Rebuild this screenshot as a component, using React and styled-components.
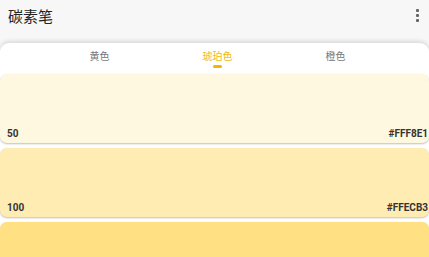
import React from "react";
import styled, { createGlobalStyle } from "styled-components";

const Global = createGlobalStyle`
  html, body { margin: 0; padding: 0; }
  body {
    background: #f7f7f7;
    font-family: Roboto, "Noto Sans CJK SC", "Noto Sans", sans-serif;
    width: 429px; height: 257px; overflow: hidden;
  }
  * { box-sizing: border-box; }
`;

const Page = styled.div`
  display: flex;
  flex-direction: column;
  height: 257px;
  overflow: hidden;
`;

const AppBar = styled.header`
  height: 31px;
  display: flex;
  align-items: center;
  justify-content: space-between;
  padding: 0 8px 0 8px;
  background: #f7f7f7;
  flex-shrink: 0;
`;

const Title = styled.h1`
  margin: 0;
  font-size: 15px;
  font-weight: 400;
  color: #222;
  font-family: "Noto Sans CJK SC", sans-serif;
`;

const More = styled.div`
  display: flex;
  flex-direction: column;
  gap: 2px;
  padding-right: 2px;
  span { width: 3px; height: 3px; background: #666; border-radius: 1px; display: block; }
`;

const Sheet = styled.div`
  margin-top: 12px;
  background: #fff;
  border-radius: 9px 9px 0 0;
  box-shadow: 0 -2px 4px rgba(0,0,0,0.12);
  display: flex;
  flex-direction: column;
  flex: 1;
  min-height: 0;
  overflow: hidden;
`;

const Tabs = styled.div`
  display: flex;
  justify-content: center;
  height: 31px;
  padding-left: 6px;
  flex-shrink: 0;
`;

const Tab = styled.div`
  width: 118px;
  display: flex;
  flex-direction: column;
  align-items: center;
  padding-top: 6px;
  font-size: 10px;
  line-height: 14px;
  font-family: "Noto Sans CJK SC", sans-serif;
  color: ${p => (p.$active ? "#f2b90c" : "#777")};
`;

const Indicator = styled.div`
  margin-top: 2px;
  width: 9px;
  height: 3px;
  border-radius: 2px;
  background: #f4b400;
`;

const List = styled.div`
  display: flex;
  flex-direction: column;
  gap: 5px;
`;

const Card = styled.div`
  height: 69px;
  border-radius: 7px;
  background: ${p => p.$bg};
  box-shadow: 0 1px 2px rgba(0,0,0,0.25);
  display: flex;
  align-items: flex-end;
  justify-content: space-between;
  padding: 0 1px 4px 7px;
  flex-shrink: 0;
`;

const Label = styled.span`
  font-size: 10px;
  font-weight: 700;
  color: #333;
  font-family: Roboto, sans-serif;
`;

const swatches = [
  { name: "50", hex: "#FFF8E1", shown: true },
  { name: "100", hex: "#FFECB3", shown: true },
  { name: "200", hex: "#FFE082", shown: false },
];

export default function App() {
  return (
    <Page>
      <Global />
      <AppBar>
        <Title>碳素笔</Title>
        <More><span /><span /><span /></More>
      </AppBar>
      <Sheet>
        <Tabs>
          <Tab>黄色</Tab>
          <Tab $active>琥珀色<Indicator /></Tab>
          <Tab>橙色</Tab>
        </Tabs>
        <List>
          {swatches.map(s => (
            <Card key={s.name} $bg={s.hex}>
              {s.shown && <Label>{s.name}</Label>}
              {s.shown && <Label>{s.hex}</Label>}
            </Card>
          ))}
        </List>
      </Sheet>
    </Page>
  );
}
